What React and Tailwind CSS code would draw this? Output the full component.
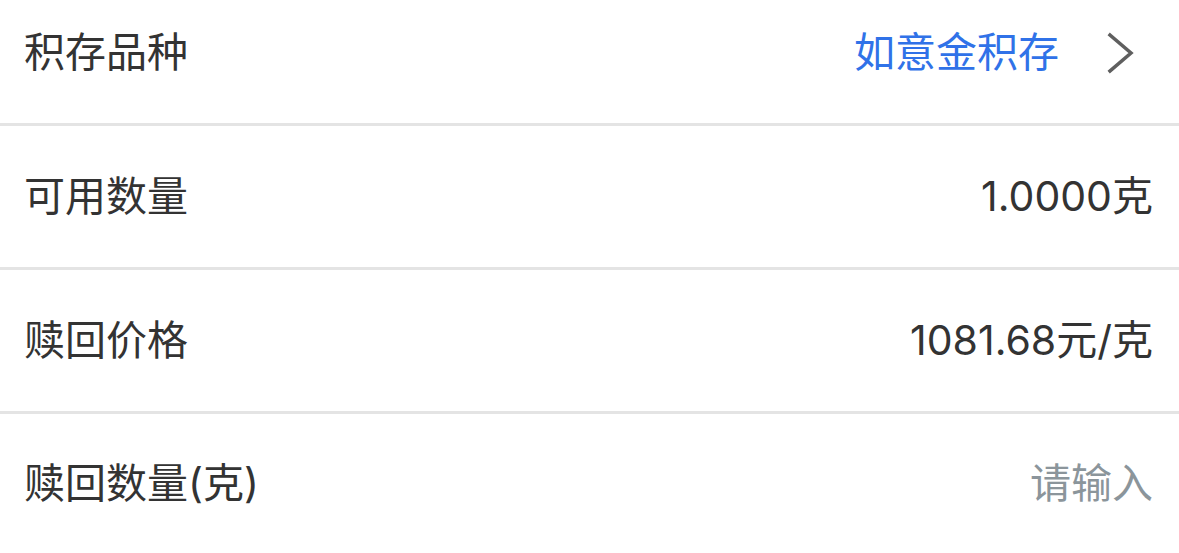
import React from "react";

const rows = [
  { label: "可用数量", value: "1.0000克" },
  { label: "赎回价格", value: "1081.68元/克" },
];

const App = () => {
  return (
    <div
      className="w-[1179px] h-[553px] overflow-hidden bg-white text-[41px] text-[#333333]"
      style={{ fontFamily: 'Inter, "Noto Sans CJK SC", sans-serif' }}
    >
      <div className="flex h-[126px] items-center justify-between border-b-[3px] border-[#e4e4e4] pb-[18px] pl-[24px] pr-[44px]">
        <span>积存品种</span>
        <div className="flex items-center gap-[48px]">
          <span className="text-[#3072e8]">如意金积存</span>
          <svg width="28" height="42" viewBox="0 0 28 42" fill="none">
            <polyline
              points="3,3 24,21 3,39"
              stroke="#5f5f5f"
              strokeWidth="3.5"
              strokeLinecap="square"
              strokeLinejoin="miter"
            />
          </svg>
        </div>
      </div>

      {rows.map((row) => (
        <div
          key={row.label}
          className="flex h-[144px] items-center justify-between border-b-[3px] border-[#e4e4e4] pl-[24px] pr-[26px]"
        >
          <span>{row.label}</span>
          <span>{row.value}</span>
        </div>
      ))}

      <div className="flex h-[140px] items-center justify-between pl-[24px] pr-[26px]">
        <span>赎回数量(克)</span>
        <span className="text-[#8b959b]">请输入</span>
      </div>
    </div>
  );
};

export default App;
